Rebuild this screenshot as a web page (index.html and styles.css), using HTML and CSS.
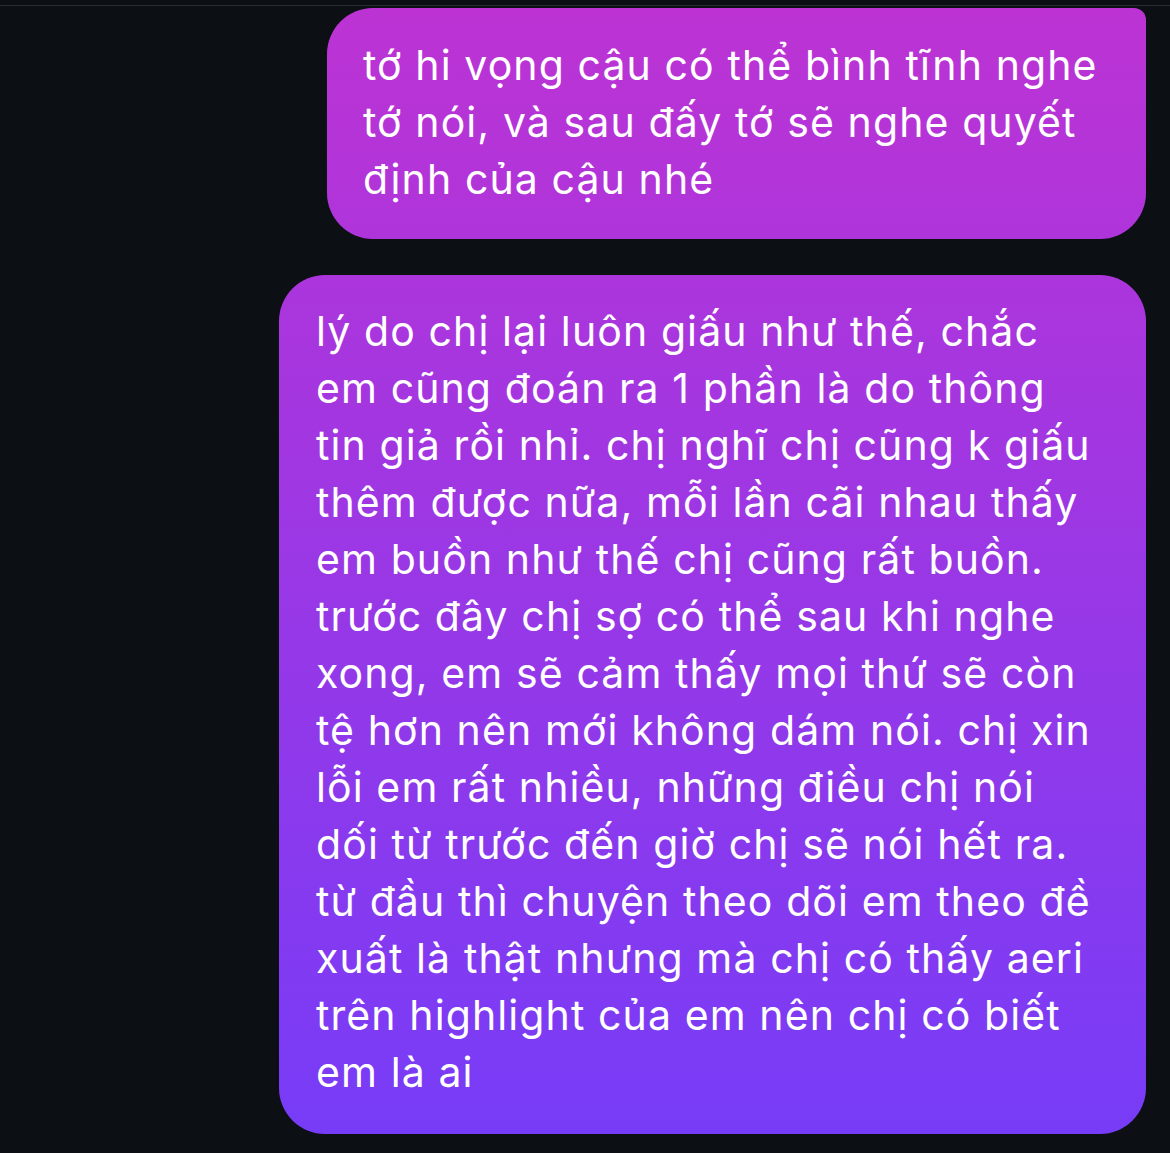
FILE: index.html
```html
<!DOCTYPE html>
<html lang="vi">
<head>
  <meta charset="UTF-8" />
  <meta name="viewport" content="width=device-width, initial-scale=1.0"/>
  <title>Chat</title>
  <link rel="stylesheet" href="styles.css">
</head>
<body>

  <div class="top-bar"></div>

  <div class="thread">
    <div class="bubble first">
      tớ hi vọng cậu có thể bình tĩnh nghe<br>
      tớ nói, và sau đấy tớ sẽ nghe quyết<br>
      định của cậu nhé
    </div>

    <div class="bubble last">
      lý do chị lại luôn giấu như thế, chắc<br>
      em cũng đoán ra 1 phần là do thông<br>
      tin giả rồi nhỉ. chị nghĩ chị cũng k giấu<br>
      thêm được nữa, mỗi lần cãi nhau thấy<br>
      em buồn như thế chị cũng rất buồn.<br>
      trước đây chị sợ có thể sau khi nghe<br>
      xong, em sẽ cảm thấy mọi thứ sẽ còn<br>
      tệ hơn nên mới không dám nói. chị xin<br>
      lỗi em rất nhiều, những điều chị nói<br>
      dối từ trước đến giờ chị sẽ nói hết ra.<br>
      từ đầu thì chuyện theo dõi em theo đề<br>
      xuất là thật nhưng mà chị có thấy aeri<br>
      trên highlight của em nên chị có biết<br>
      em là ai
    </div>
  </div>

</body>
</html>
```

FILE: styles.css
```css
:root {
  --bg: #0c0f13;
  --line: #2a2d31;
  --grad-top: #bd33d3;
  --grad-bottom: #763cf8;
  --radius: 46px;
}

* {
  box-sizing: border-box;
}

body {
  margin: 0;
  padding: 0;
  background: var(--bg);
  font-family: 'Inter', 'Noto Sans', sans-serif;
  color: #fff;
  height: 1153px;
  overflow: hidden;
}

.top-bar {
  height: 6px;
  border-bottom: 1px solid var(--line);
}

.thread {
  display: flex;
  flex-direction: column;
  align-items: flex-end;
  gap: 36px;
  padding: 2px 24px 0 0;
}

.bubble {
  background: linear-gradient(180deg, var(--grad-top) 0%, var(--grad-bottom) 100%) fixed;
  border-radius: var(--radius);
  font-size: 41px;
  line-height: 57px;
  letter-spacing: 1.1px;
  padding: 29px 10px 31px 36px;
  white-space: nowrap;
}

.bubble.first {
  width: 819px;
  border-top-right-radius: 12px;
}

.bubble.last {
  width: 867px;
  padding: 28px 10px 33px 37px;
}
```
